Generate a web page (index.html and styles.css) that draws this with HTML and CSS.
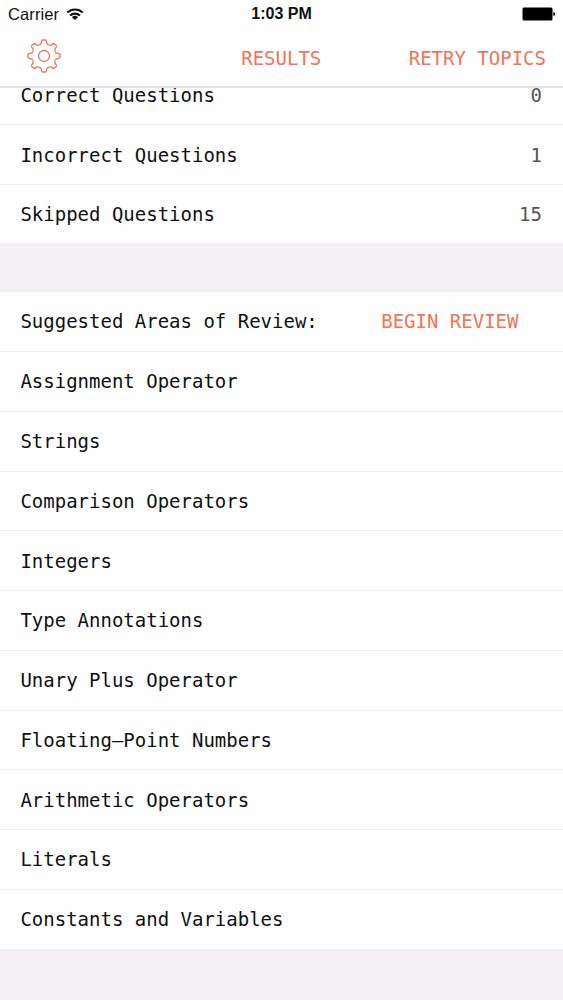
FILE: index.html
```
<!DOCTYPE html>
<html lang="en">
<head>
    <meta charset="UTF-8">
    <meta name="viewport" content="width=device-width, initial-scale=1.0">
    <title>Results</title>
    <link rel="stylesheet" href="styles.css">
</head>
<body>
    <header class="header">
        <div class="status-bar">
            <div class="carrier">
                <span>Carrier</span>
                <svg class="wifi" viewBox="0 0 18 13" width="18" height="13">
                    <path d="M1.3 4.6 A11 11 0 0 1 16.7 4.6" />
                    <path d="M4 7.6 A7.2 7.2 0 0 1 14 7.6" />
                    <path class="dot" d="M9 12 L5.9 9.2 A4.6 4.6 0 0 1 12.1 9.2 Z" />
                </svg>
            </div>
            <span class="time">1:03 PM</span>
            <svg class="battery" viewBox="0 0 34 14" width="34" height="14">
                <rect x="0.5" y="0.5" width="30" height="13" rx="1.5" />
                <path d="M31.3 5 Q33.2 5.4 33.2 7 Q33.2 8.6 31.3 9 Z" />
            </svg>
        </div>
        <nav class="nav-bar">
            <button class="settings" aria-label="Settings">
                <svg viewBox="-18 -18 36 36" width="36" height="36">
                    <defs>
                        <path id="tooth" d="M-4.6 -11.1 Q-3 -11.8 -2.6 -13.2 L-2.3 -15.2 Q-2.1 -16 -1.3 -16 H1.3 Q2.1 -16 2.3 -15.2 L2.6 -13.2 Q3 -11.8 4.6 -11.1" />
                    </defs>
                    <use href="#tooth" />
                    <use href="#tooth" transform="rotate(45)" />
                    <use href="#tooth" transform="rotate(90)" />
                    <use href="#tooth" transform="rotate(135)" />
                    <use href="#tooth" transform="rotate(180)" />
                    <use href="#tooth" transform="rotate(225)" />
                    <use href="#tooth" transform="rotate(270)" />
                    <use href="#tooth" transform="rotate(315)" />
                    <circle r="5.5" />
                </svg>
            </button>
            <h1>RESULTS</h1>
            <button class="retry">RETRY TOPICS</button>
        </nav>
    </header>

    <main class="content">
        <ul class="list scores">
            <li><span>Correct Questions</span><span class="value">0</span></li>
            <li><span>Incorrect Questions</span><span class="value">1</span></li>
            <li><span>Skipped Questions</span><span class="value">15</span></li>
        </ul>
        <ul class="list topics">
            <li class="heading"><span>Suggested Areas of Review:</span><button class="review">BEGIN REVIEW</button></li>
            <li>Assignment Operator</li>
            <li>Strings</li>
            <li>Comparison Operators</li>
            <li>Integers</li>
            <li>Type Annotations</li>
            <li>Unary Plus Operator</li>
            <li>Floating–Point Numbers</li>
            <li>Arithmetic Operators</li>
            <li>Literals</li>
            <li>Constants and Variables</li>
        </ul>
    </main>
</body>
</html>
```

FILE: styles.css
```
* {
    margin: 0;
    padding: 0;
    box-sizing: border-box;
}

body {
    height: 100vh;
    display: flex;
    flex-direction: column;
    overflow: hidden;
    background: #f2f0f4;
    color: #111;
    font-family: "DejaVu Sans Mono", monospace;
    font-size: 19px;
}

button {
    border: none;
    background: none;
    color: #f27556;
    font: inherit;
    cursor: pointer;
}

.header {
    flex: none;
    height: 88px;
    background: #fefefe;
    border-bottom: 2px solid #e2e1e4;
}

.status-bar {
    display: grid;
    grid-template-columns: 1fr auto 1fr;
    align-items: center;
    height: 28px;
    padding: 0 8px;
    font-family: "Liberation Sans", Arial, sans-serif;
    font-size: 16.5px;
}

.carrier {
    display: flex;
    align-items: center;
    gap: 7px;
    letter-spacing: 0.1px;
}

.wifi {
    fill: none;
    stroke: #111;
    stroke-width: 2.1;
}

.wifi .dot {
    fill: #111;
    stroke: none;
}

.time {
    font-size: 16px;
    font-weight: bold;
}

.battery {
    justify-self: end;
    margin-right: -1px;
    fill: #000;
}

.nav-bar {
    display: grid;
    grid-template-columns: 1fr auto 1fr;
    align-items: center;
    height: 56px;
    padding: 0 17px 0 25.5px;
}

.nav-bar h1 {
    margin-left: -9px;
    padding-top: 4px;
    color: #f27556;
    font-size: 19px;
    font-weight: normal;
}

.settings {
    width: 36px;
    height: 36px;
}

.settings svg {
    display: block;
    fill: none;
    stroke: #f27556;
    stroke-width: 1.3;
}

.retry {
    justify-self: end;
    padding-top: 4px;
}

.content {
    flex: 1;
    overflow: hidden;
}

.list {
    list-style: none;
    background: #fefefe;
}

.list li {
    display: flex;
    justify-content: space-between;
    align-items: center;
    height: 59.75px;
    padding: 0 21px 0 20.4px;
    border-bottom: 1px solid #f2f2f4;
}

/* the first row is scrolled partly under the nav bar */
.scores {
    margin-top: -23px;
    margin-bottom: 48px;
}

.scores li {
    padding-top: 1px;
}

.list .heading {
    padding-bottom: 1px;
}

.value {
    color: #555;
}

.review {
    margin-right: 23.5px;
}
```
